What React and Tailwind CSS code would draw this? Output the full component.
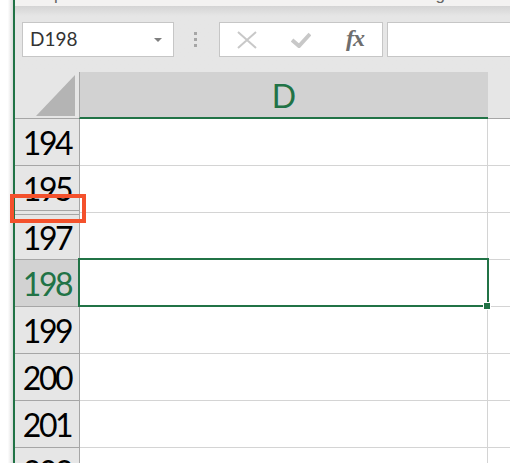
import React from 'react';

const headers = [
  { n: '194', h: 'h-[47px]' },
  { n: '195', h: 'h-[45px]' },
  { n: '', h: 'h-[4px]' },
  { n: '197', h: 'h-[45px]' },
  { n: '198', h: 'h-[47px]', active: true },
  { n: '199', h: 'h-[47px]' },
  { n: '200', h: 'h-[47px]' },
  { n: '201', h: 'h-[47px]' },
  { n: '202', h: 'h-[47px]' },
];

const gridRows = [194, 195, 197, 198, 199, 200, 201, 202];

const RowHeader = ({ n, h, active }) => (
  <div
    className={`${h} shrink-0 flex items-center justify-center border-b border-[#a6a6a6] text-[32px] tracking-[-2.4px] ${
      n ? 'pt-[2px]' : ''
    } ${active ? 'bg-[#d2d2d2] text-[#217346]' : 'bg-[#e6e6e6] text-black'}`}
  >
    {n}
  </div>
);

export default function App() {
  return (
    <div className="relative flex w-[510px] h-[463px] overflow-hidden bg-white font-['Lato',sans-serif]">
      {/* window edge */}
      <div className="w-[13px] shrink-0 bg-gradient-to-r from-white from-60% to-[#dcdcdc]" />
      <div className="w-[2px] shrink-0 bg-[#217346]" />

      <div className="flex-1 flex flex-col min-w-0">
        {/* cut off ribbon text */}
        <div className="h-[6px] shrink-0 flex bg-[#f3f2f1] overflow-hidden text-[#666] text-[17px] leading-[20px] font-['Liberation_Sans',sans-serif]">
          <span className="ml-[39px] -mt-[15px]">p</span>
          <span className="ml-[372px] -mt-[15px]">g</span>
        </div>

        {/* formula bar */}
        <div className="h-[66px] shrink-0 flex items-start pt-[16px] pl-[7px] gap-[4px] bg-gradient-to-b from-[#d4d4d4] from-0% to-[#e6e6e6] to-15%">
          <div className="w-[152px] h-[35px] shrink-0 flex items-center justify-between pl-[7px] pr-[11px] bg-white border border-[#c6c6c6] text-[19px] text-[#333]">
            <span>D198</span>
            <span className="w-0 h-0 border-x-[4px] border-x-transparent border-t-[4px] border-t-[#7f7f7f]" />
          </div>
          <div className="w-[37px] h-[35px] shrink-0 flex flex-col items-center justify-center gap-[3px] pr-[3px]">
            <span className="w-[3px] h-[3px] bg-[#a6a6a6]" />
            <span className="w-[3px] h-[3px] bg-[#a6a6a6]" />
            <span className="w-[3px] h-[3px] bg-[#a6a6a6]" />
          </div>
          <div className="w-[164px] h-[35px] shrink-0 flex items-center pl-[17px] bg-white border border-[#c6c6c6]">
            <svg width="20" height="18" viewBox="0 0 20 18" className="shrink-0">
              <path d="M1 1 L19 17 M19 1 L1 17" stroke="#c8c8c8" strokeWidth="2" fill="none" />
            </svg>
            <svg width="20" height="16" viewBox="0 0 20 16" className="shrink-0 ml-[34px]">
              <path d="M1 8 L8 14 L19 2" stroke="#c8c8c8" strokeWidth="4" fill="none" />
            </svg>
            <span className="ml-[35px] -mt-[3px] font-['Liberation_Serif',serif] italic font-bold text-[24px] text-[#6e6e6e] tracking-[-1px]">
              fx
            </span>
          </div>
          <div className="flex-1 h-[35px] bg-white border border-[#c6c6c6] border-r-0" />
        </div>

        {/* column header */}
        <div className="h-[47px] shrink-0 flex bg-[#e6e6e6]">
          <div className="w-[64px] shrink-0 flex items-end justify-end pr-[3px] pb-[2px] border-b border-[#a6a6a6]">
            <svg width="40" height="41" viewBox="0 0 40 41">
              <path d="M0 41 L39 0 L39 41 Z" fill="#b4b4b4" />
            </svg>
          </div>
          <div className="w-[409px] shrink-0 flex items-center justify-center pt-[3px] bg-[#d2d2d2] border-l border-[#a6a6a6] border-b-2 border-b-[#217346] text-[32px] text-[#217346]">
            D
          </div>
          <div className="flex-1 border-b border-[#a6a6a6]" />
        </div>

        {/* sheet */}
        <div className="flex flex-1 min-h-0 overflow-hidden">
          <div className="w-[64px] shrink-0 flex flex-col">
            {headers.map((r, i) => (
              <RowHeader key={i} {...r} />
            ))}
          </div>
          <div className="flex-1 flex flex-col border-l border-[#a6a6a6]">
            {gridRows.map((r) => (
              <div key={r} className="h-[47px] shrink-0 flex border-b border-[#d4d4d4]">
                <div className="w-[408px] shrink-0 border-r border-[#d4d4d4]" />
              </div>
            ))}
          </div>
        </div>
      </div>

      {/* selected cell */}
      <div className="absolute left-[78px] top-[258px] w-[411px] h-[49px] border-2 border-[#217346]" />
      <div className="absolute left-[483px] top-[302px] w-[8px] h-[8px] bg-[#217346] border border-white" />

      {/* red callout */}
      <div className="absolute left-[10px] top-[194px] w-[76px] h-[29px] border-[4px] border-[#f4512c]" />
    </div>
  );
}
